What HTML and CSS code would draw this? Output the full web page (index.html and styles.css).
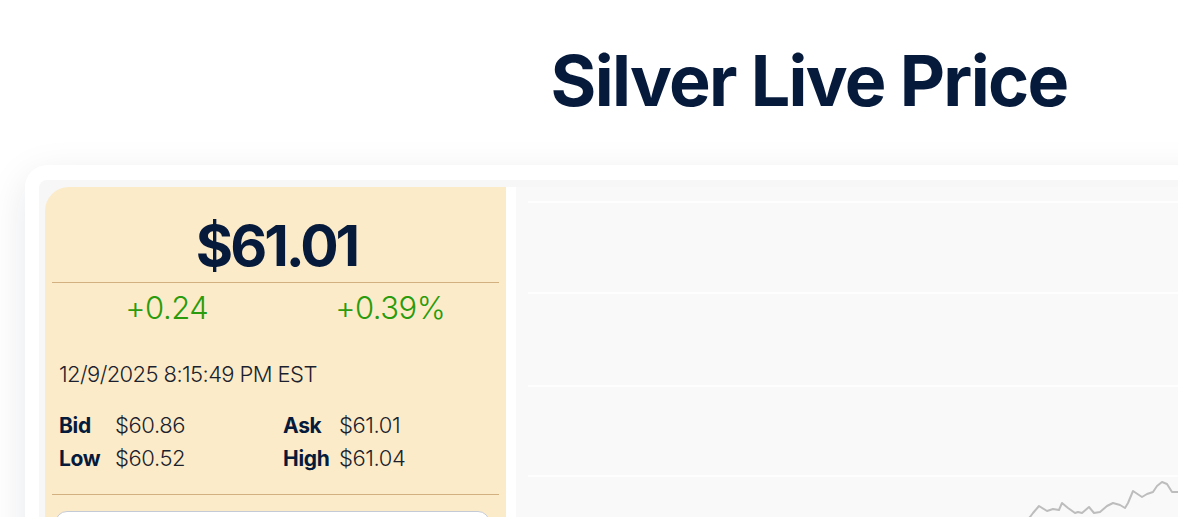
FILE: index.html
```html
<!DOCTYPE html>
<html lang="en">
<head>
<meta charset="utf-8">
<title>Silver Live Price</title>
<link rel="stylesheet" href="styles.css">
</head>
<body>
<div class="viewport">
  <div class="container">
    <h1 class="title">Silver Live Price</h1>
    <section class="card">
      <div class="card-inner">
        <div class="quote">
          <div class="price">$61.01</div>
          <div class="rule"></div>
          <div class="change">
            <span>+0.24</span>
            <span>+0.39%</span>
          </div>
          <div class="stamp">12/9/2025 8:15:49 PM EST</div>
          <div class="stats">
            <div class="stat"><span class="lbl">Bid</span><span class="val">$60.86</span></div>
            <div class="stat"><span class="lbl">Ask</span><span class="val">$61.01</span></div>
            <div class="stat"><span class="lbl">Low</span><span class="val">$60.52</span></div>
            <div class="stat"><span class="lbl">High</span><span class="val">$61.04</span></div>
          </div>
          <div class="rule rule-bottom"></div>
          <div class="select-box"></div>
        </div>
        <div class="chart">
          <svg class="chart-svg" width="1060" height="340" viewBox="0 0 1060 340" xmlns="http://www.w3.org/2000/svg">
            <g stroke="#ffffff" stroke-width="1.5">
              <line x1="12" y1="15" x2="1060" y2="15"/>
              <line x1="12" y1="106" x2="1060" y2="106"/>
              <line x1="12" y1="199" x2="1060" y2="199"/>
              <line x1="12" y1="289" x2="1060" y2="289"/>
            </g>
            <polyline fill="none" stroke="#bdbdbd" stroke-width="2" stroke-linejoin="round"
              points="508,336 514,330 517,326 523,319 531,324 537,322 543,323 546,316 552,321 559,326 562,325 566,326 573,320 578,326 584,325 591,319 597,316 604,318 609,321 612,316 617,304 626,310 631,307 637,305 641,299 646,295 651,297 656,305 662,305 700,300"/>
          </svg>
        </div>
      </div>
    </section>
  </div>
</div>
</body>
</html>
```

FILE: styles.css
```css
html, body {
  margin: 0;
  padding: 0;
  background: #ffffff;
  overflow: hidden;
}

body {
  font-family: Inter, "Noto Sans", "Liberation Sans", sans-serif;
  color: #061a3c;
}

.viewport {
  height: 517px;
  overflow: hidden;
  background: #ffffff;
}

.container {
  width: 1568px;
  margin-left: 25px;
  padding-top: 45px;
}

.title {
  margin: 0 0 48px;
  text-align: center;
  font-size: 70px;
  line-height: 72px;
  font-weight: 700;
  color: #061a3c;
  letter-spacing: -1.7px;
}

.card {
  background: #ffffff;
  border-radius: 22px;
  box-shadow: 0 12px 40px rgba(20, 30, 60, 0.1);
  padding: 15px 0 0 14px;
  height: 400px;
}

.card-inner {
  background: #f7f7f7;
  border-radius: 8px 0 0 0;
  padding: 7px 0 0 6px;
  display: flex;
  height: 100%;
}

.quote {
  width: 461px;
  flex: none;
  background: #fcebc8;
  border-radius: 24px 0 0 0;
  padding: 30px 7px 0;
  box-sizing: border-box;
}

.price {
  text-align: center;
  font-size: 57px;
  line-height: 58px;
  font-weight: 700;
  color: #061a3c;
  letter-spacing: -3px;
  padding-left: 2px;
}

.rule {
  height: 1px;
  background: #d3b07f;
  margin-top: 7px;
}

.change {
  display: grid;
  grid-template-columns: 1fr 1fr;
  margin-top: 8px;
  font-size: 31px;
  line-height: 33px;
  font-weight: 300;
  color: #2a9b0c;
  text-align: center;
  letter-spacing: -0.5px;
}

.change span:first-child {
  padding-left: 6px;
}

.change span:last-child {
  padding-left: 6px;
}

.stamp {
  margin: 39px 0 0 7px;
  font-size: 22px;
  line-height: 22px;
  font-weight: 300;
  color: #1b1f2e;
  letter-spacing: -0.6px;
}

.stats {
  display: grid;
  grid-template-columns: 224px 1fr;
  margin: 24px 0 0 7px;
}

.stat {
  display: flex;
  font-size: 21px;
  line-height: 33px;
}

.lbl {
  width: 56px;
  font-weight: 700;
  color: #061a3c;
  letter-spacing: -0.3px;
}

.val {
  font-size: 22px;
  font-weight: 300;
  color: #1b1f2e;
  letter-spacing: -0.4px;
}

.rule-bottom {
  margin-top: 19px;
}

.select-box {
  margin: 16px 0 0 3px;
  width: 435px;
  height: 44px;
  background: #ffffff;
  border: 1px solid #c5cbd6;
  border-radius: 12px;
  box-sizing: border-box;
}

.chart {
  flex: none;
  width: 1060px;
  border-left: 10px solid #ffffff;
  background: #f9f9f9;
}

.chart-svg {
  display: block;
}
```
